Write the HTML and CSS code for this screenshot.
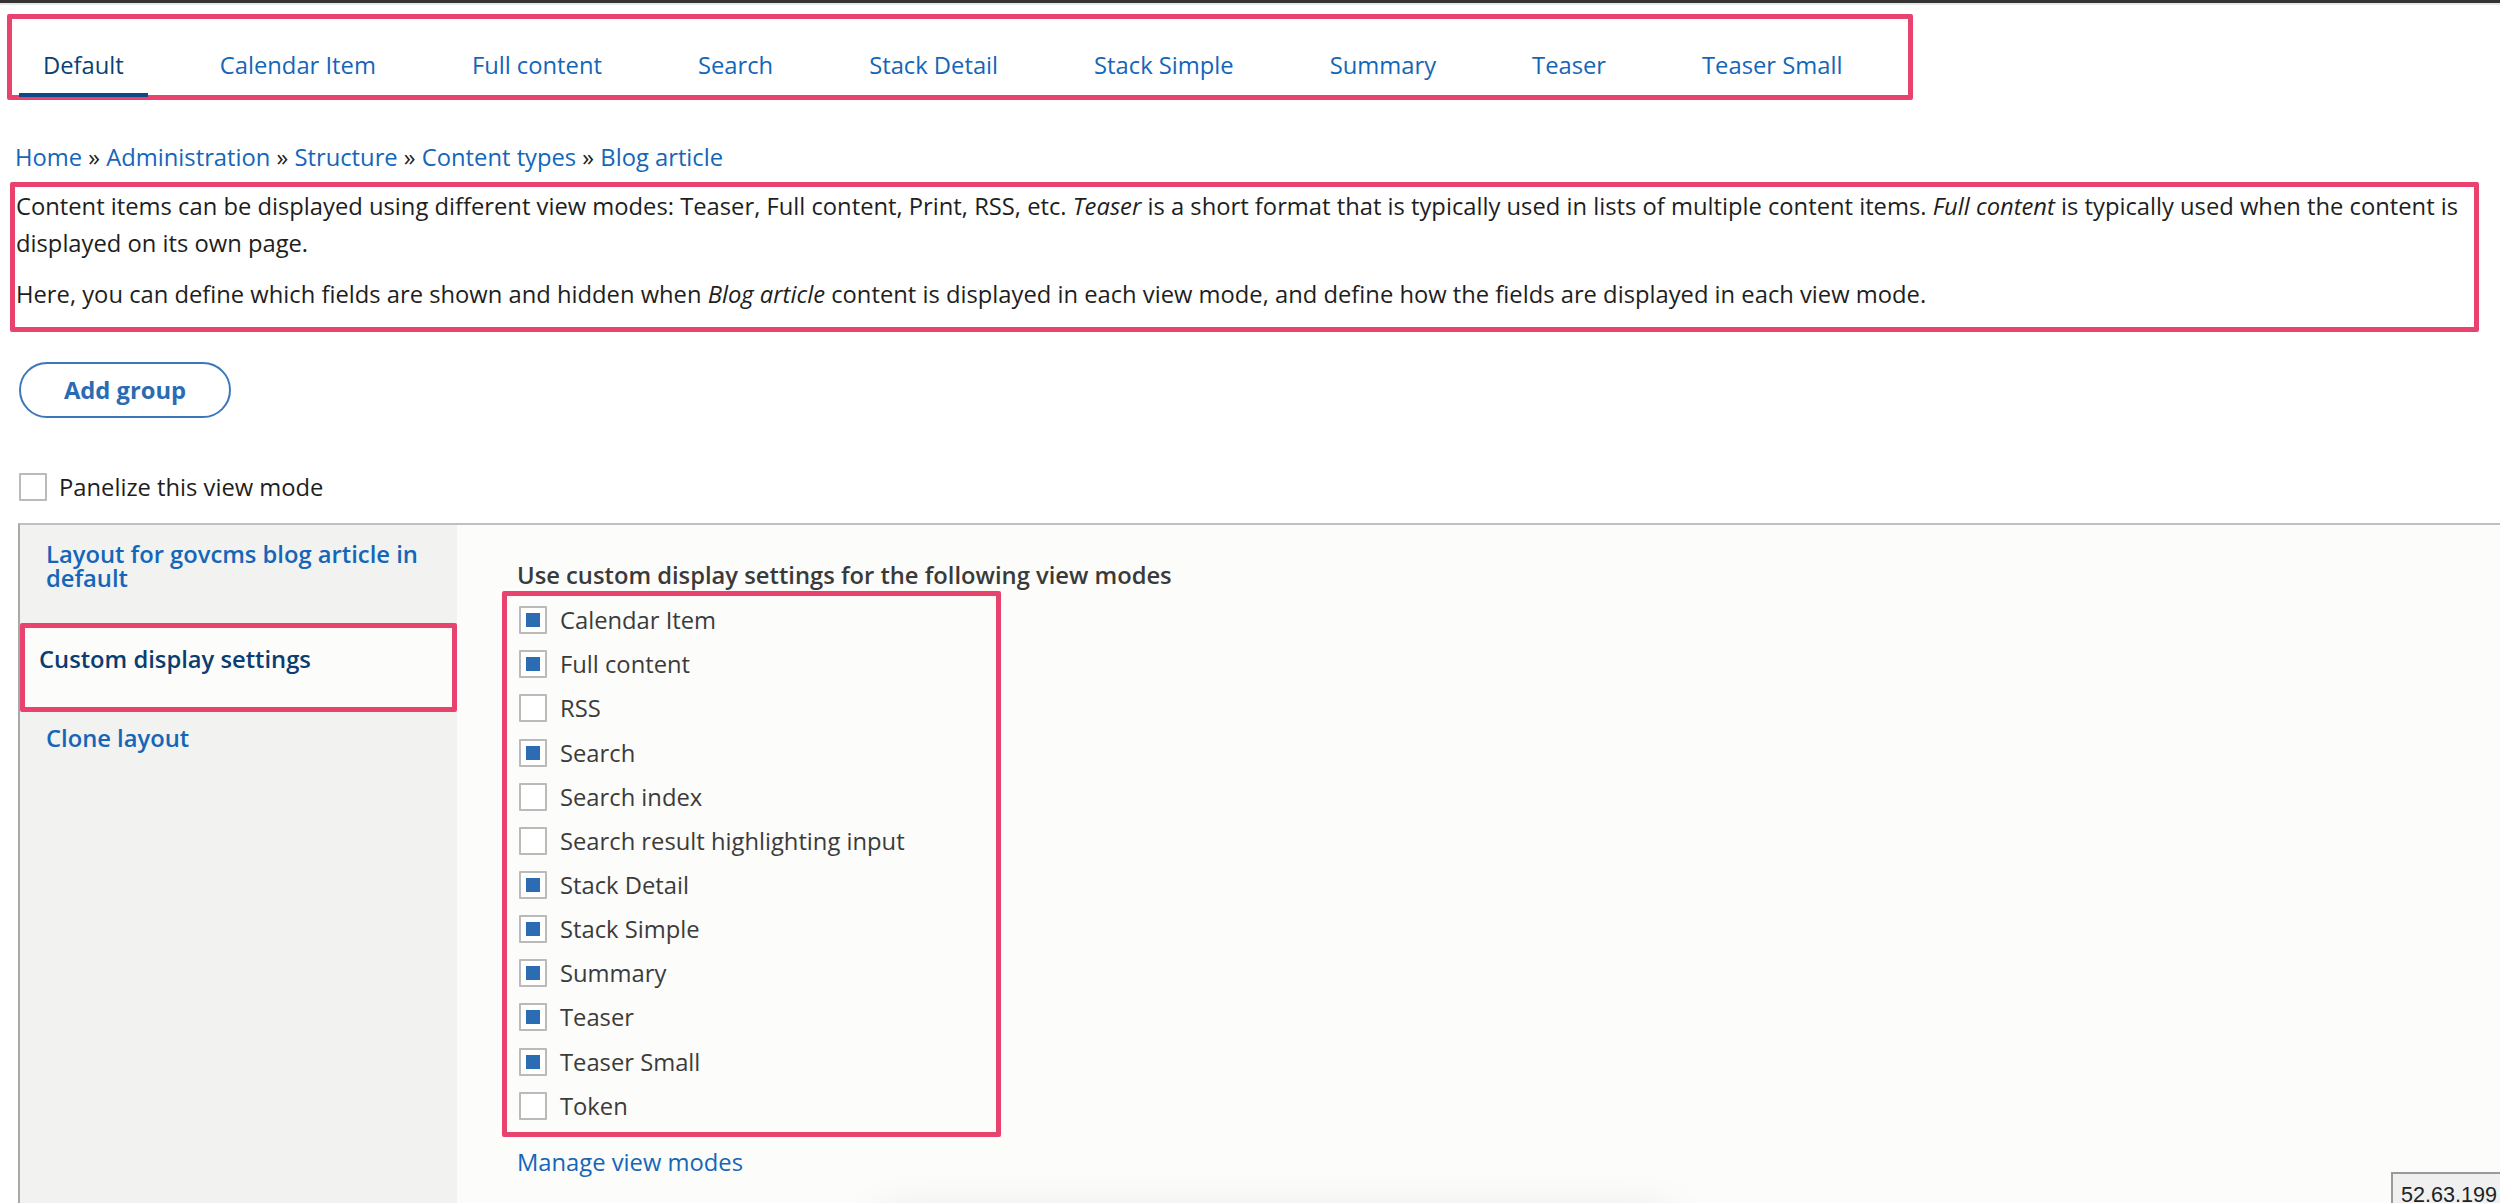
FILE: index.html
```html
<!DOCTYPE html>
<html lang="en">
<head>
<meta charset="utf-8">
<title>Manage display</title>
<link rel="stylesheet" href="styles.css">
</head>
<body>
<div class="topbar"></div>
<div class="page">
  <nav class="tabs-box">
    <ul class="tabs">
      <li><a class="tab active">Default</a></li>
      <li><a class="tab">Calendar Item</a></li>
      <li><a class="tab">Full content</a></li>
      <li><a class="tab">Search</a></li>
      <li><a class="tab">Stack Detail</a></li>
      <li><a class="tab">Stack Simple</a></li>
      <li><a class="tab">Summary</a></li>
      <li><a class="tab">Teaser</a></li>
      <li><a class="tab">Teaser Small</a></li>
    </ul>
  </nav>

  <div class="breadcrumb"><a>Home</a> » <a>Administration</a> » <a>Structure</a> » <a>Content types</a> » <a>Blog article</a></div>

  <div class="desc">
    <p>Content items can be displayed using different view modes: Teaser, Full content, Print, RSS, etc. <em>Teaser</em> is a short format that is typically used in lists of multiple content items. <em>Full content</em> is typically used when the content is displayed on its own page.</p>
    <p>Here, you can define which fields are shown and hidden when <em>Blog article</em> content is displayed in each view mode, and define how the fields are displayed in each view mode.</p>
  </div>

  <button class="btn">Add group</button>

  <label class="panelize"><span class="cb"></span><span>Panelize this view mode</span></label>

  <div class="panel">
    <ul class="vtabs">
      <li class="vtab"><a>Layout for govcms blog article in default</a></li>
      <li class="vtab selected"><a>Custom display settings</a></li>
      <li class="vtab last"><a>Clone layout</a></li>
    </ul>
    <div class="pane">
      <div class="pane-title">Use custom display settings for the following view modes</div>
      <div class="modes">
        <div class="mode"><span class="cb checked"></span><span>Calendar Item</span></div>
        <div class="mode"><span class="cb checked"></span><span>Full content</span></div>
        <div class="mode"><span class="cb"></span><span>RSS</span></div>
        <div class="mode"><span class="cb checked"></span><span>Search</span></div>
        <div class="mode"><span class="cb"></span><span>Search index</span></div>
        <div class="mode"><span class="cb"></span><span>Search result highlighting input</span></div>
        <div class="mode"><span class="cb checked"></span><span>Stack Detail</span></div>
        <div class="mode"><span class="cb checked"></span><span>Stack Simple</span></div>
        <div class="mode"><span class="cb checked"></span><span>Summary</span></div>
        <div class="mode"><span class="cb checked"></span><span>Teaser</span></div>
        <div class="mode"><span class="cb checked"></span><span>Teaser Small</span></div>
        <div class="mode"><span class="cb"></span><span>Token</span></div>
      </div>
      <a class="manage">Manage view modes</a>
    </div>
  </div>
</div>
<div class="bottom-shadow"></div>
<div class="ip">52.63.199</div>
</body>
</html>
```

FILE: styles.css
```css
html, body {
  margin: 0;
  padding: 0;
  overflow: hidden;
  background: #ffffff;
}
body {
  font-family: "Open Sans", "Noto Sans", sans-serif;
  font-size: 23.75px;
  color: #222222;
  width: 2500px;
  height: 1203px;
}
a { text-decoration: none; cursor: pointer; }

.topbar {
  height: 3px;
  background: #333333;
  border-bottom: 2px solid #e6e6e6;
}

.page {
  display: flex;
  flex-direction: column;
  align-items: flex-start;
}

/* tabs */
.tabs-box {
  margin: 9px 0 0 7px;
  width: 1906px;
  height: 86px;
  box-sizing: border-box;
  border: 5px solid #e9426e;
  border-radius: 2px;
}
.tabs {
  list-style: none;
  margin: 0 0 -2px 0;
  padding: 0 0 0 7px;
  display: flex;
  gap: 48px;
}
.tab {
  display: block;
  padding: 30px 24px 12px;
  line-height: 32px;
  border-bottom: 4px solid transparent;
  color: #1466b8;
}
.tab.active {
  color: #0b3f74;
  border-bottom-color: #0b4a85;
}

/* breadcrumb */
.breadcrumb {
  margin-top: 41px;
  padding-left: 15px;
  line-height: 32px;
  color: #222222;
}
.breadcrumb a { color: #1466b8; }

/* description */
.desc {
  margin: 9px 0 0 10px;
  width: 2469px;
  box-sizing: border-box;
  border: 5px solid #e9426e;
  border-radius: 2px;
  padding: 1px 6px 0 1px;
}
.desc p {
  margin: 0 0 14px;
  line-height: 37px;
  color: #1e1e1e;
}

/* button */
.btn {
  margin: 30px 0 0 19px;
  width: 212px;
  height: 56px;
  box-sizing: border-box;
  border: 2px solid #3b78bb;
  border-radius: 28px;
  background: #ffffff;
  color: #2a6bb3;
  font-family: "Open Sans", sans-serif;
  font-weight: 700;
  font-size: 23.75px;
  padding: 0;
}

/* checkbox */
.cb {
  width: 28px;
  height: 28px;
  box-sizing: border-box;
  border: 2px solid #bababa;
  border-radius: 1px;
  background: #ffffff;
  display: flex;
  align-items: center;
  justify-content: center;
  flex: none;
}
.cb.checked::before {
  content: "";
  width: 14px;
  height: 14px;
  background: #2b6cb3;
}

.panelize {
  margin: 55px 0 0 19px;
  display: flex;
  align-items: center;
  gap: 12px;
  height: 28px;
  color: #1e1e1e;
}

/* panel */
.panel {
  margin: 22px 0 0 18px;
  width: 2500px;
  height: 800px;
  border-top: 2px solid #c0c0c0;
  border-left: 2px solid #a8a8a8;
  display: grid;
  grid-template-columns: 437px 1fr;
}
.vtabs {
  list-style: none;
  margin: 0;
  padding: 0;
  background: #f2f2f0;
}
.vtab {
  padding: 17px 20px 33px 26px;
  line-height: 24px;
  font-weight: 600;
}
.vtab a { color: #1466b8; }
.vtab.selected {
  border: 5px solid #e9426e;
  border-radius: 2px;
  background: #fcfcfa;
  padding: 19px 20px 36px 14px;
}
.vtab.selected a { color: #0b3d70; }
.vtab.last { padding-top: 14px; }

.pane {
  background: #fcfcfa;
  padding: 34px 0 0 60px;
}
.pane-title {
  line-height: 32px;
  font-weight: 600;
  color: #3a3a3a;
}
.modes {
  margin-left: -15px;
  width: 499px;
  box-sizing: border-box;
  border: 5px solid #e9426e;
  border-radius: 2px;
  padding: 2px 0 4px 12px;
}
.mode {
  height: 44.17px;
  display: flex;
  align-items: center;
  gap: 13px;
  color: #3b3b3b;
}
.manage {
  display: block;
  margin-top: 9px;
  line-height: 32px;
  color: #1466b8;
}

/* overlays */
.bottom-shadow {
  position: fixed;
  left: 880px;
  top: 1222px;
  width: 790px;
  height: 60px;
  border-radius: 20px;
  background: #f0f0f0;
  box-shadow: 0 0 45px 10px rgba(0, 0, 0, 0.09);
}
.ip {
  position: fixed;
  left: 2391px;
  top: 1172px;
  width: 130px;
  height: 40px;
  box-sizing: border-box;
  padding: 8px 0 0 8px;
  background: #f0f0f0;
  border-top: 2px solid #9a9a9a;
  border-left: 2px solid #9a9a9a;
  font-family: "Liberation Sans", Arial, sans-serif;
  font-size: 21.6px;
  line-height: 25px;
  color: #222222;
  white-space: nowrap;
}
```
